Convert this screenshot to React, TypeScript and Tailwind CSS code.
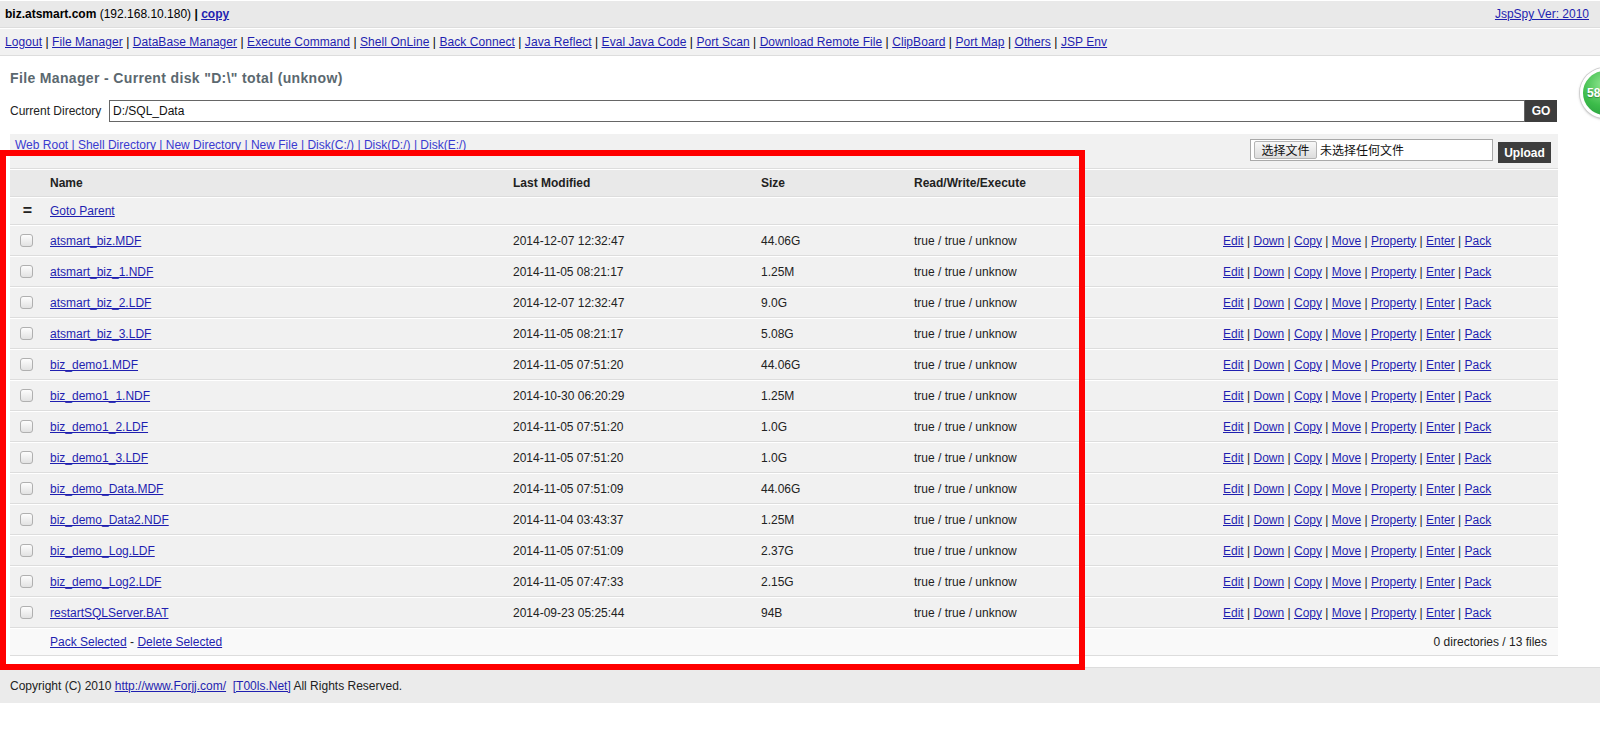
import React from "react";

const files: [string, string, string][] = [
  ["atsmart_biz.MDF", "2014-12-07 12:32:47", "44.06G"],
  ["atsmart_biz_1.NDF", "2014-11-05 08:21:17", "1.25M"],
  ["atsmart_biz_2.LDF", "2014-12-07 12:32:47", "9.0G"],
  ["atsmart_biz_3.LDF", "2014-11-05 08:21:17", "5.08G"],
  ["biz_demo1.MDF", "2014-11-05 07:51:20", "44.06G"],
  ["biz_demo1_1.NDF", "2014-10-30 06:20:29", "1.25M"],
  ["biz_demo1_2.LDF", "2014-11-05 07:51:20", "1.0G"],
  ["biz_demo1_3.LDF", "2014-11-05 07:51:20", "1.0G"],
  ["biz_demo_Data.MDF", "2014-11-05 07:51:09", "44.06G"],
  ["biz_demo_Data2.NDF", "2014-11-04 03:43:37", "1.25M"],
  ["biz_demo_Log.LDF", "2014-11-05 07:51:09", "2.37G"],
  ["biz_demo_Log2.LDF", "2014-11-05 07:47:33", "2.15G"],
  ["restartSQLServer.BAT", "2014-09-23 05:25:44", "94B"],
];

const navLinks = [
  "Logout",
  "File Manager",
  "DataBase Manager",
  "Execute Command",
  "Shell OnLine",
  "Back Connect",
  "Java Reflect",
  "Eval Java Code",
  "Port Scan",
  "Download Remote File",
  "ClipBoard",
  "Port Map",
  "Others",
  "JSP Env",
];

const dirLinks = ["Web Root", "Shell Directory", "New Directory", "New File", "Disk(C:/)", "Disk(D:/)", "Disk(E:/)"];
const actions = ["Edit", "Down", "Copy", "Move", "Property", "Enter", "Pack"];

function A({ children }: { children: React.ReactNode }) {
  return <a className="text-[#1f1fb0] underline cursor-pointer">{children}</a>;
}

function Sep({ items }: { items: string[] }) {
  return (
    <>
      {items.map((t, i) => (
        <React.Fragment key={t}>
          {i > 0 && <span className="whitespace-pre"> | </span>}
          <A>{t}</A>
        </React.Fragment>
      ))}
    </>
  );
}

const cols = "grid grid-cols-[35px_463px_248px_153px_309px_340px]";
const rowBorder = "border-t border-t-white border-b border-b-[#dddddd]";

export default function App() {
  return (
    <div className="relative w-[1600px] h-[740px] overflow-hidden bg-white text-[12px] leading-4 text-black font-['Liberation_Sans',Arial,sans-serif]">
      {/* header bar */}
      <div className={`flex justify-between h-[28px] bg-[#e9e9e9] pl-[5px] pr-[11px] py-[5px] ${rowBorder}`}>
        <div className="font-bold">
          biz.atsmart.com <span className="font-normal">(192.168.10.180)</span> | <A>copy</A>
        </div>
        <A>JspSpy Ver: 2010</A>
      </div>
      {/* nav bar */}
      <div className={`h-[28px] bg-[#f1f1f1] pl-[5px] py-[5px] tracking-[0.06px] ${rowBorder}`}>
        <Sep items={navLinks} />
      </div>

      {/* title */}
      <h2 className="mt-[10px] pl-[10px] h-[24px] leading-[24px] text-[14px] font-bold tracking-[0.35px] text-[#5b686f]">
        File Manager - Current disk &quot;D:\&quot; total (unknow)
      </h2>

      {/* current directory */}
      <div className="mt-[10px] ml-[10px] w-[1548px] flex items-center">
        <div className="w-[99px] text-[#222]">Current Directory</div>
        <div className="w-[1416px] h-[22px] border border-[#666] bg-white px-[3px] flex items-center text-[#111]">D:/SQL_Data</div>
        <div className="w-[32px] h-[22px] bg-[#3d3d3d] text-white font-bold flex items-center justify-center">GO</div>
      </div>

      {/* dir links + upload */}
      <div className={`mt-[11px] ml-[10px] w-[1548px] h-[36px] bg-[#f1f1f1] flex justify-between items-start ${rowBorder}`}>
        <div className="pl-[5px] pt-[3px] text-[#3a3ad0] [&_a]:text-[#3a3ad0]">
          <Sep items={dirLinks} />
        </div>
        <div className="flex items-start pr-[7px] pt-[5px]">
          <div className="w-[243px] h-[22px] border border-[#a9a9a9] bg-white flex items-center pl-[3px] font-['Noto_Sans_CJK_SC',sans-serif] text-[12px] text-[#111]">
            <div className="w-[63px] h-[18px] border border-[#b5b5b5] rounded-[2px] bg-linear-to-b from-[#f8f8f8] to-[#dddddd] flex items-center justify-center">
              选择文件
            </div>
            <span className="ml-[3px]">未选择任何文件</span>
          </div>
          <div className="ml-[5px] mt-[3px] w-[53px] h-[21px] bg-[#3d3d3d] text-white font-bold flex items-center justify-center">
            Upload
          </div>
        </div>
      </div>

      {/* table */}
      <div className="ml-[10px] w-[1548px] text-[#222]">
        <div className={`${cols} h-[28px] items-center bg-[#e9e9e9] font-bold ${rowBorder}`}>
          <div />
          <div className="pl-[5px]">Name</div>
          <div className="pl-[5px]">Last Modified</div>
          <div className="pl-[5px]">Size</div>
          <div className="pl-[5px]">Read/Write/Execute</div>
          <div />
        </div>
        <div className={`${cols} h-[28px] items-center bg-[#f1f1f1] ${rowBorder}`}>
          <div className="text-center font-bold text-[16px] leading-4">=</div>
          <div className="pl-[5px]">
            <A>Goto Parent</A>
          </div>
          <div />
          <div />
          <div />
          <div />
        </div>
        {files.map(([name, date, size]) => (
          <div key={name} className={`${cols} h-[31px] items-center bg-[#f1f1f1] ${rowBorder}`}>
            <div className="pl-[10px] flex items-center">
              <span className="inline-block w-[13px] h-[13px] rounded-[3px] border border-[#b0b0b0] bg-linear-to-b from-[#fdfdfd] to-[#e2e2e2]" />
            </div>
            <div className="pl-[5px]">
              <A>{name}</A>
            </div>
            <div className="pl-[5px]">{date}</div>
            <div className="pl-[5px]">{size}</div>
            <div className="pl-[5px]">true / true / unknow</div>
            <div className="pl-[5px] whitespace-nowrap">
              <Sep items={actions} />
            </div>
          </div>
        ))}
        <div className={`flex h-[28px] items-center bg-[#f9f9f9] ${rowBorder}`}>
          <div className="w-[35px]" />
          <div className="flex-1 flex justify-between pl-[5px] pr-[11px]">
            <div>
              <A>Pack Selected</A> - <A>Delete Selected</A>
            </div>
            <div>0 directories / 13 files</div>
          </div>
        </div>
      </div>

      {/* footer */}
      <div className="mt-[11px] h-[36px] bg-[#ebebeb] border-t border-t-[#dddddd] pl-[10px] flex items-center text-[#222]">
        <span className="whitespace-pre">
          Copyright (C) 2010 <A>http://www.Forjj.com/</A>{"  "}<A>[T00ls.Net]</A> All Rights Reserved.
        </span>
      </div>

      {/* red annotation box */}
      <div className="absolute left-0 top-[150px] w-[1085px] h-[520px] border-[6px] border-[#ff0000] pointer-events-none" />

      {/* floating green ball */}
      <div className="absolute left-[1580px] top-[68px] w-[50px] h-[50px] rounded-full border-[3px] border-white shadow-[0_0_0_1px_#cfcfcf,0_1px_3px_rgba(0,0,0,0.35)] bg-[radial-gradient(circle_at_45%_30%,#8de48d,#3cbc4a_55%,#23963a)]">
        <span className="absolute left-[4px] top-[14px] text-white font-bold text-[12px] leading-4 [text-shadow:0_1px_1px_rgba(0,0,0,0.3)]">
          58
        </span>
      </div>
    </div>
  );
}
